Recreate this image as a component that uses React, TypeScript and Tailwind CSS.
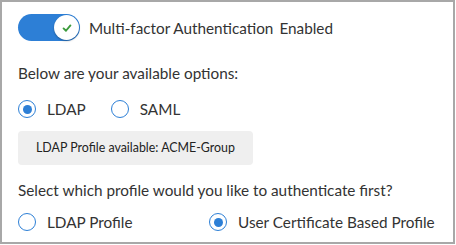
const Radio = ({ checked, label }: { checked?: boolean; label: string }) => (
  <label className="flex items-center">
    <span className="flex h-[18px] w-[18px] items-center justify-center rounded-full border-[1.5px] border-[#2d7fd6] bg-white">
      {checked && <span className="h-[9px] w-[9px] rounded-full bg-[#2d7fd6]"></span>}
    </span>
    <span className="ml-[11px]">{label}</span>
  </label>
);

export default function App() {
  return (
    <div
      className="h-[244px] w-[455px] border-2 border-[#a8a8a8] bg-white pl-4 pt-3 text-[15.3px] leading-6 text-[#333]"
      style={{ fontFamily: 'Lato, "Open Sans", sans-serif' }}
    >
      {/* toggle row */}
      <div className="flex items-center">
        <div className="flex h-[27px] w-[62px] items-center justify-end rounded-full bg-[#2d7fd6] pr-[1px]">
          <div className="flex h-[25px] w-[25px] items-center justify-center rounded-full bg-white shadow-[0_1px_2px_rgba(0,0,0,0.3)]">
            <svg width="12" height="12" viewBox="0 0 14 14" fill="none">
              <path d="M3 7.5 L5.8 10.2 L11 4" stroke="#3c9b3c" strokeWidth="2.2" strokeLinecap="round" strokeLinejoin="round" />
            </svg>
          </div>
        </div>
        <span className="ml-[9px]">Multi-factor Authentication</span>
        <span className="ml-[6px]">Enabled</span>
      </div>

      <p className="mt-5">Below are your available options:</p>

      <div className="mt-3 flex gap-[25px]">
        <Radio checked label="LDAP" />
        <Radio label="SAML" />
      </div>

      <div className="mt-[10px] flex h-[34px] w-[235px] items-center rounded bg-[#efefef] pl-[18px] text-[12.4px] text-[#222]">
        LDAP Profile available: ACME-Group
      </div>

      <p className="mt-[13px]">Select which profile would you like to authenticate first?</p>

      <div className="mt-2 flex">
        <div className="w-[191px]">
          <Radio label="LDAP Profile" />
        </div>
        <Radio checked label="User Certificate Based Profile" />
      </div>
    </div>
  );
}
